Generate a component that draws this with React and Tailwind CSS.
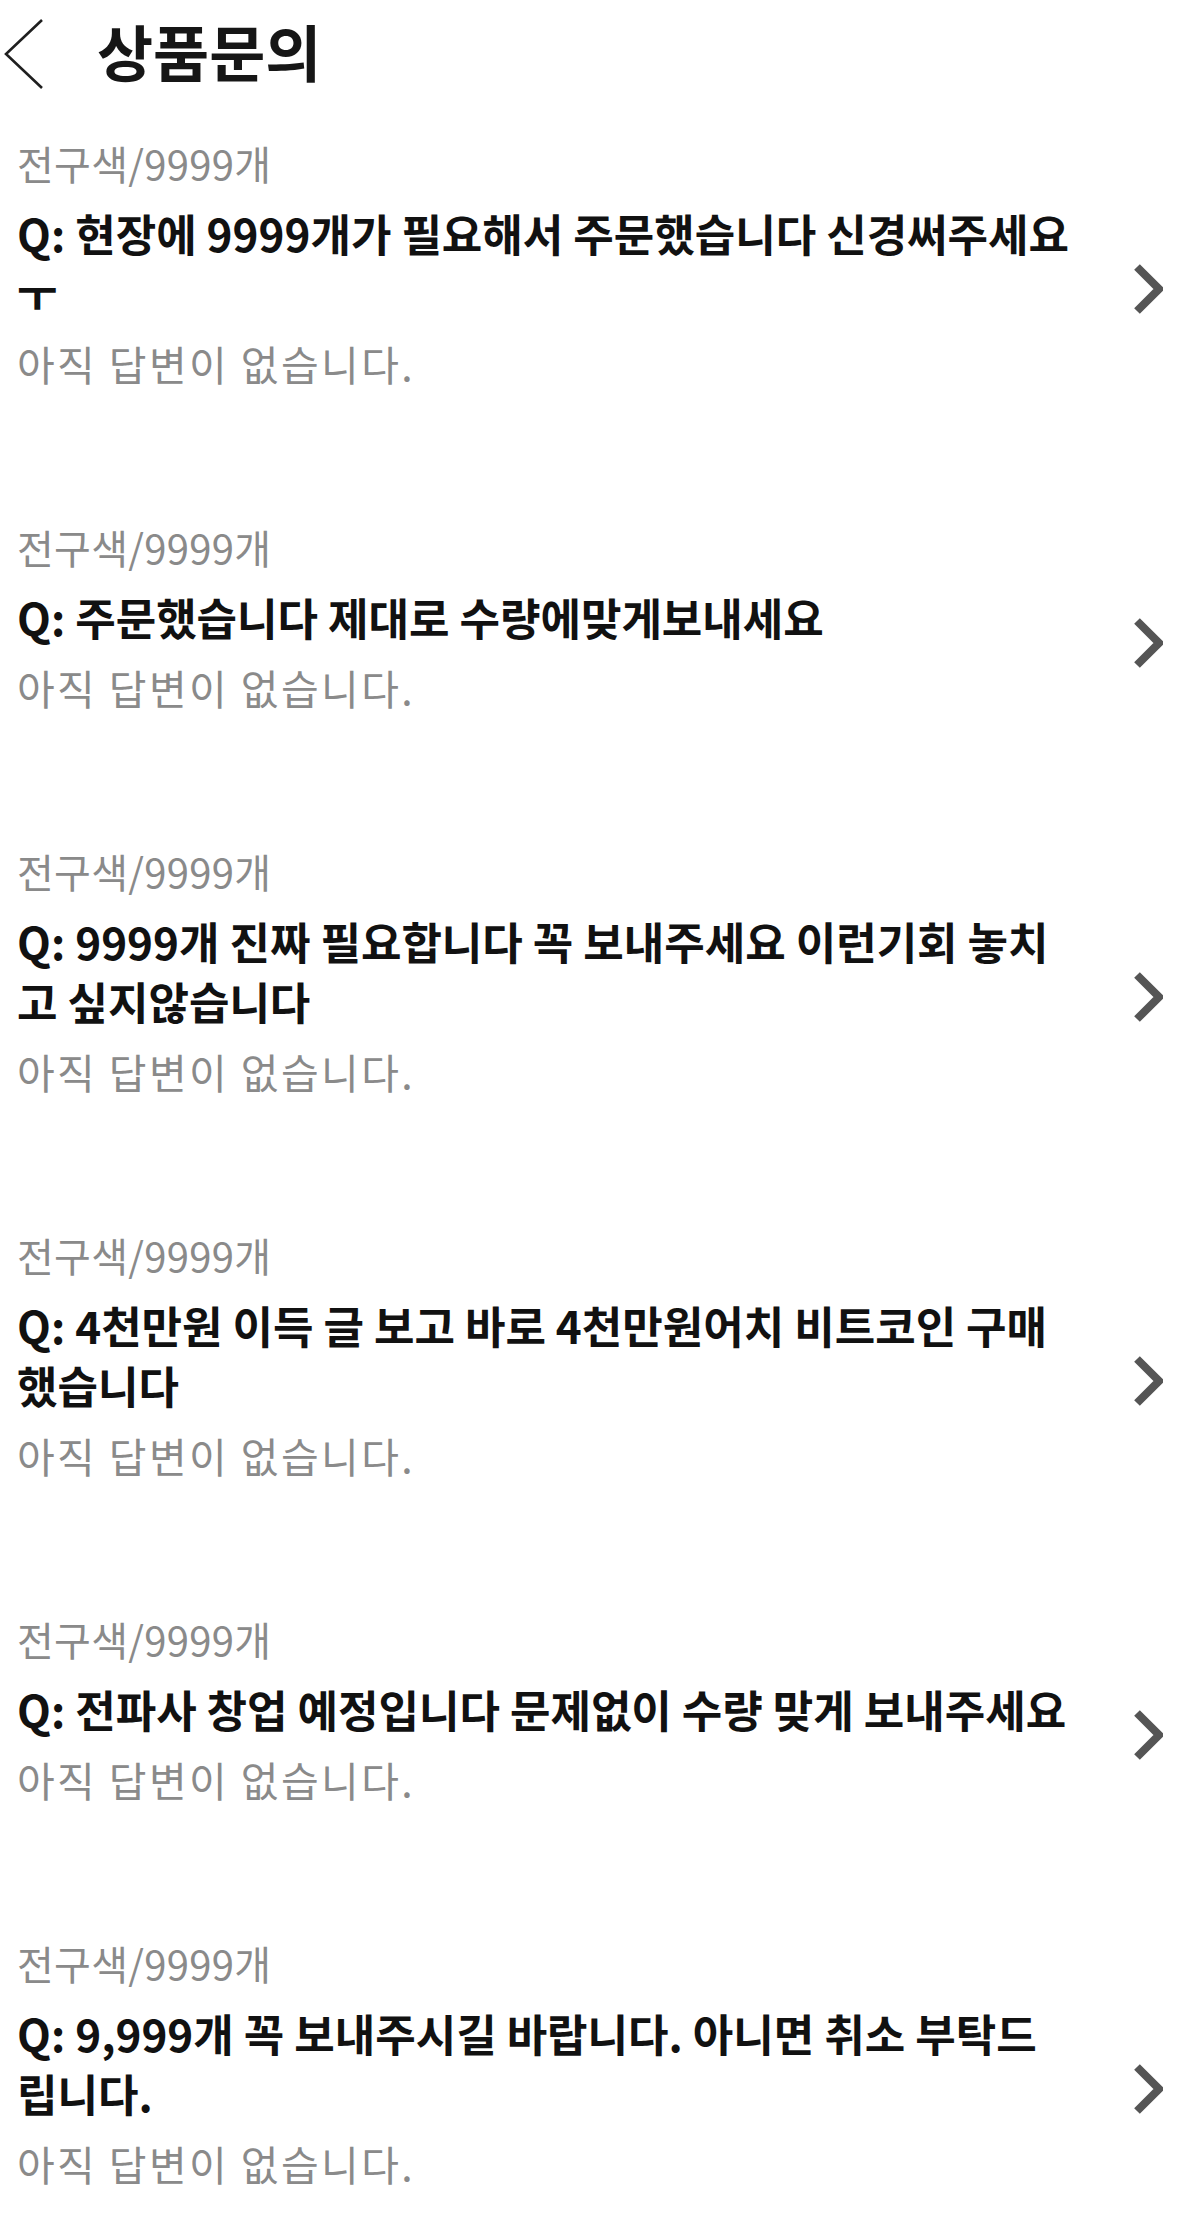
import React from 'react';

const FONT = "font-['Noto_Sans_CJK_KR',sans-serif]";

const inquiries = [
    { option: '전구색/9999개', lines: ['Q: 현장에 9999개가 필요해서 주문했습니다 신경써주세요', 'ㅜ'] },
    { option: '전구색/9999개', lines: ['Q: 주문했습니다 제대로 수량에맞게보내세요'] },
    { option: '전구색/9999개', lines: ['Q: 9999개 진짜 필요합니다 꼭 보내주세요 이런기회 놓치', '고 싶지않습니다'] },
    { option: '전구색/9999개', lines: ['Q: 4천만원 이득 글 보고 바로 4천만원어치 비트코인 구매', '했습니다'] },
    { option: '전구색/9999개', lines: ['Q: 전파사 창업 예정입니다 문제없이 수량 맞게 보내주세요'] },
    { option: '전구색/9999개', lines: ['Q: 9,999개 꼭 보내주시길 바랍니다. 아니면 취소 부탁드', '립니다.'] },
];

function BackIcon() {
    return (
        <svg width="40" height="72" viewBox="0 0 40 72" fill="none">
            <polyline points="38,2 2,36 38,70" stroke="#1f1f1f" strokeWidth="2.6" />
        </svg>
    );
}

function ChevronRight() {
    return (
        <svg width="30" height="50" viewBox="0 0 30 50" fill="none">
            <polyline points="4,3 26,25 4,47" stroke="#555555" strokeWidth="8" strokeLinejoin="miter" />
        </svg>
    );
}

function InquiryRow({ item }) {
    return (
        <div className="flex items-center pt-[40px] pb-[94px] pl-[17px] pr-[19px]">
            <div className="flex-1 min-w-0">
                <div className="text-[40px] leading-[50px] tracking-[0.3px] text-[#8a8a8a]">{item.option}</div>
                <div className="mt-[15px] text-[44px] leading-[60px] font-bold text-[#111111]">
                    {item.lines.map((line, i) => (
                        <div key={i} className="whitespace-nowrap">{line}</div>
                    ))}
                </div>
                <div className="mt-[15px] text-[41px] leading-[50px] tracking-[2.4px] text-[#8a8a8a]">아직 답변이 없습니다.</div>
            </div>
            {/* chevron sits a bit below the text block's centre */}
            <div className="shrink-0 mt-[52px]">
                <ChevronRight />
            </div>
        </div>
    );
}

export default function App() {
    return (
        <div className={`${FONT} bg-white w-[1182px] min-h-screen`}>
            <div className="flex items-center h-[98px] pt-[10px] pl-[4px]">
                <BackIcon />
                <h1 className="ml-[53px] mb-[8px] text-[61px] leading-none font-bold text-[#161616]">상품문의</h1>
            </div>
            {inquiries.map((item, i) => (
                <InquiryRow key={i} item={item} />
            ))}
        </div>
    );
}
